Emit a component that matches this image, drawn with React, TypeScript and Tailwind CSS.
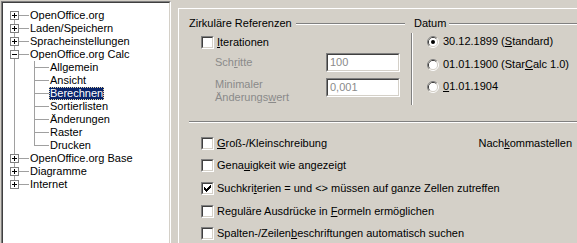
import React from "react";

type TreeNode = {
  label: string;
  depth: 0 | 1;
  exp?: "plus" | "minus";
  selected?: boolean;
};

const nodes: TreeNode[] = [
  { label: "OpenOffice.org", depth: 0, exp: "plus" },
  { label: "Laden/Speichern", depth: 0, exp: "plus" },
  { label: "Spracheinstellungen", depth: 0, exp: "plus" },
  { label: "OpenOffice.org Calc", depth: 0, exp: "minus" },
  { label: "Allgemein", depth: 1 },
  { label: "Ansicht", depth: 1 },
  { label: "Berechnen", depth: 1, selected: true },
  { label: "Sortierlisten", depth: 1 },
  { label: "Änderungen", depth: 1 },
  { label: "Raster", depth: 1 },
  { label: "Drucken", depth: 1 },
  { label: "OpenOffice.org Base", depth: 0, exp: "plus" },
  { label: "Diagramme", depth: 0, exp: "plus" },
  { label: "Internet", depth: 0, exp: "plus" },
];

// classic win32 sunken 2px edge
const Sunken = ({ className = "", children }: { className?: string; children?: React.ReactNode }) => (
  <div className={`border border-t-[#808080] border-l-[#808080] border-r-white border-b-white ${className}`}>
    <div className="h-full w-full border border-t-[#404040] border-l-[#404040] border-r-[#d4d0c8] border-b-[#d4d0c8] bg-white">
      {children}
    </div>
  </div>
);

const FixedLine = ({ className = "" }: { className?: string }) => (
  <div className={`h-[2px] flex-1 border-t border-b border-t-[#808080] border-b-white ${className}`} />
);

const checkCols = [2, 3, 4, 3, 2, 1, 0];

const Checkbox = ({ checked = false }: { checked?: boolean }) => (
  <Sunken className="h-[13px] w-[13px] shrink-0">
    {checked && (
      <svg width="9" height="9" viewBox="0 0 9 9" shapeRendering="crispEdges" className="block">
        {checkCols.map((y, x) => (
          <rect key={x} x={x + 1} y={y + 1} width="1" height="3" fill="#000" />
        ))}
      </svg>
    )}
  </Sunken>
);

const Radio = ({ checked = false }: { checked?: boolean }) => (
  <svg width="12" height="12" viewBox="0 0 12 12" className="block shrink-0">
    <path d="M2.11 9.89 A5.5 5.5 0 0 1 9.89 2.11" fill="none" stroke="#808080" />
    <path d="M9.89 2.11 A5.5 5.5 0 0 1 2.11 9.89" fill="none" stroke="#ffffff" />
    <path d="M2.82 9.18 A4.5 4.5 0 0 1 9.18 2.82" fill="none" stroke="#404040" />
    <path d="M9.18 2.82 A4.5 4.5 0 0 1 2.82 9.18" fill="none" stroke="#d4d0c8" />
    <circle cx="6" cy="6" r="4" fill="#ffffff" />
    {checked && <circle cx="6" cy="6" r="2" fill="#000000" />}
  </svg>
);

const Field = ({ value }: { value: string }) => (
  <Sunken className="h-[19px] w-[74px] shrink-0">
    <div className="flex h-full items-center pl-[2px] text-[#8a8a8a]">{value}</div>
  </Sunken>
);

const Expander = ({ kind }: { kind: "plus" | "minus" }) => (
  <span className="absolute left-[7px] top-[2px] h-[9px] w-[9px] border border-[#808080] bg-white">
    <span className="absolute left-[1px] top-[3px] h-px w-[5px] bg-black" />
    {kind === "plus" && <span className="absolute left-[3px] top-[1px] h-[5px] w-px bg-black" />}
  </span>
);

const TreeRow = ({ node, index }: { node: TreeNode; index: number }) => {
  const first = index === 0;
  const last = index === nodes.length - 1;
  const lastChild = node.depth === 1 && nodes[index + 1]?.depth === 0;
  const trunk = first ? "top-[6px] bottom-0" : last ? "top-0 h-[7px]" : "top-0 bottom-0";

  return (
    <div className="flex h-[13px] items-center">
      {node.depth === 0 ? (
        <div className="relative h-[13px] w-[26px] shrink-0">
          <span className={`absolute left-[11px] w-px bg-[#a0a0a0] ${trunk}`} />
          <span className="absolute left-[11px] top-[6px] h-px w-[15px] bg-[#a0a0a0]" />
          {node.exp && <Expander kind={node.exp} />}
        </div>
      ) : (
        <div className="relative h-[13px] w-[46px] shrink-0">
          <span className="absolute bottom-0 left-[11px] top-0 w-px bg-[#a0a0a0]" />
          <span
            className={`absolute left-[31px] top-0 w-px bg-[#a0a0a0] ${lastChild ? "h-[7px]" : "bottom-0"}`}
          />
          <span className="absolute left-[31px] top-[6px] h-px w-[15px] bg-[#a0a0a0]" />
        </div>
      )}
      <span
        className={`h-[13px] whitespace-nowrap border ${
          node.selected
            ? "border-dotted border-[#e8d8a8] bg-[#0a246a] text-white"
            : "border-transparent"
        } leading-[11px]`}
      >
        {node.label}
      </span>
    </div>
  );
};

export default function App() {
  return (
    <div className="flex h-[243px] w-[577px] overflow-hidden bg-[#d4d0c8] font-['Liberation_Sans',Arial,sans-serif] text-[11px] leading-[13px] text-black">
      {/* options tree */}
      <div className="ml-[1px] mt-[1px] h-[260px] w-[170px] shrink-0 border border-t-[#808080] border-l-[#808080] border-r-white border-b-white">
        <div className="h-full w-full border border-t-[#404040] border-l-[#404040] border-r-[#d4d0c8] border-b-[#d4d0c8] bg-white pt-[6px]">
          {nodes.map((n, i) => (
            <TreeRow key={n.label} node={n} index={i} />
          ))}
        </div>
      </div>

      {/* tab page */}
      <div className="ml-[7px] mt-[8px] flex-1 border-l border-t border-white pl-[10px] pt-[8px]">
        <div className="flex">
          <div className="w-[216px] shrink-0">
            <div className="flex h-[13px] items-center">
              <span className="whitespace-nowrap">Zirkuläre Referenzen</span>
              <FixedLine className="ml-[4px] mt-[1px]" />
            </div>
            <div className="mt-[6px] flex h-[13px] items-center pl-[12px]">
              <Checkbox />
              <span className="ml-[3px]">
                <u>I</u>terationen
              </span>
            </div>
            <div className="mt-[4px] flex h-[19px] items-center pl-[26px] text-[#8a8a8a]">
              <span className="w-[111px] shrink-0">
                Sch<u>r</u>itte
              </span>
              <Field value="100" />
            </div>
            <div className="mt-[6px] flex pl-[26px] text-[#8a8a8a]">
              <span className="w-[111px] shrink-0">
                Minimaler
                <br />
                Änderungs<u>w</u>ert
              </span>
              <Field value="0,001" />
            </div>
          </div>

          <div className="ml-[6px] flex-1">
            <div className="flex h-[13px] items-center">
              <span className="ml-[3px]">Datum</span>
              <FixedLine className="ml-[3px] mt-[1px]" />
            </div>
            <div className="mt-[3px] flex">
              <div className="w-px bg-[#808080]" />
              <div className="w-px bg-white" />
              <div className="pb-[12px] pl-[14px] pt-[2px]">
                <div className="flex h-[13px] items-center">
                  <Radio checked />
                  <span className="ml-[4px] whitespace-nowrap">
                    30.12.1899 (<u>S</u>tandard)
                  </span>
                </div>
                <div className="mt-[10px] flex h-[13px] items-center">
                  <Radio />
                  <span className="ml-[4px] whitespace-nowrap">
                    01.01.1900 (Star<u>C</u>alc 1.0)
                  </span>
                </div>
                <div className="mt-[9px] flex h-[13px] items-center">
                  <Radio />
                  <span className="ml-[4px] whitespace-nowrap">
                    <u>0</u>1.01.1904
                  </span>
                </div>
              </div>
            </div>
          </div>
        </div>

        <div className="mt-[16px] flex">
          <FixedLine />
        </div>

        <div className="mt-[14px] flex h-[13px] items-center pl-[12px]">
          <Checkbox />
          <span className="ml-[3px] whitespace-nowrap">
            <u>G</u>roß-/Kleinschreibung
          </span>
          <span className="ml-auto mr-[5px] whitespace-nowrap">
            Nach<u>k</u>ommastellen
          </span>
        </div>
        <div className="mt-[9px] flex h-[13px] items-center pl-[12px]">
          <Checkbox />
          <span className="ml-[3px] whitespace-nowrap">
            Gena<u>u</u>igkeit wie angezeigt
          </span>
        </div>
        <div className="mt-[10px] flex h-[13px] items-center pl-[12px]">
          <Checkbox checked />
          <span className="ml-[3px] whitespace-nowrap">
            Suchkri<u>t</u>erien = und {"<>"} müssen auf ganze Zellen zutreffen
          </span>
        </div>
        <div className="mt-[10px] flex h-[13px] items-center pl-[12px]">
          <Checkbox />
          <span className="ml-[3px] whitespace-nowrap">
            Reguläre Ausdrücke in <u>F</u>ormeln ermöglichen
          </span>
        </div>
        <div className="mt-[9px] flex h-[13px] items-center pl-[12px]">
          <Checkbox />
          <span className="ml-[3px] whitespace-nowrap">
            Spalten-/Zeilen<u>b</u>eschriftungen automatisch suchen
          </span>
        </div>
      </div>
    </div>
  );
}
